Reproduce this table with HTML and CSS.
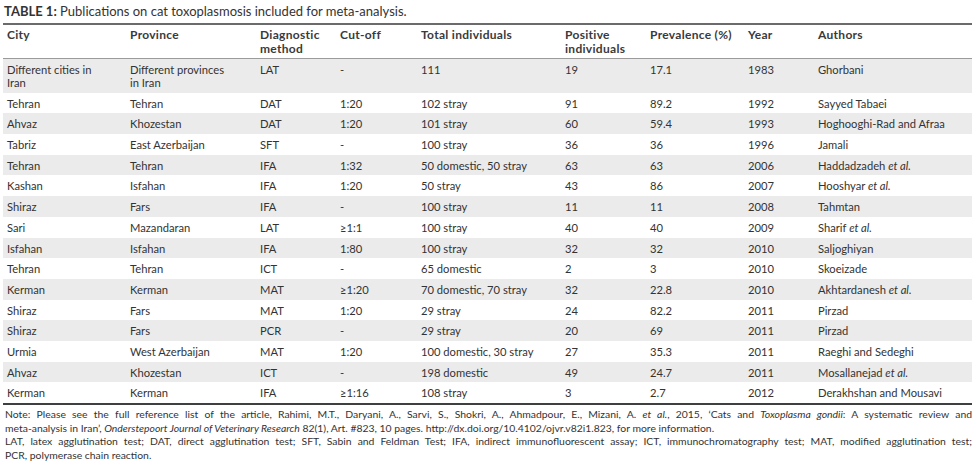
FILE: index.html
```html
<!DOCTYPE html>
<html>
<head>
<meta charset="utf-8">
<link rel="stylesheet" href="styles.css">
</head>
<body>
<div class="page">
  <div class="caption"><b>TABLE 1:</b> Publications on cat toxoplasmosis included for meta-analysis.</div>
  <table class="data">
    <colgroup>
      <col class="c1"><col class="c2"><col class="c3"><col class="c4"><col class="c5"><col class="c6"><col class="c7"><col class="c8"><col class="c9">
    </colgroup>
    <thead>
      <tr><th>City</th><th>Province</th><th>Diagnostic<br>method</th><th>Cut-off</th><th>Total individuals</th><th>Positive<br>individuals</th><th>Prevalence (%)</th><th>Year</th><th>Authors</th></tr>
    </thead>
    <tbody>
      <tr><td>Different cities in<br>Iran</td><td>Different provinces<br>in Iran</td><td>LAT</td><td>-</td><td>111</td><td>19</td><td>17.1</td><td>1983</td><td>Ghorbani</td></tr>
      <tr><td>Tehran</td><td>Tehran</td><td>DAT</td><td>1:20</td><td>102 stray</td><td>91</td><td>89.2</td><td>1992</td><td>Sayyed Tabaei</td></tr>
      <tr><td>Ahvaz</td><td>Khozestan</td><td>DAT</td><td>1:20</td><td>101 stray</td><td>60</td><td>59.4</td><td>1993</td><td>Hoghooghi-Rad and Afraa</td></tr>
      <tr><td>Tabriz</td><td>East Azerbaijan</td><td>SFT</td><td>-</td><td>100 stray</td><td>36</td><td>36</td><td>1996</td><td>Jamali</td></tr>
      <tr><td>Tehran</td><td>Tehran</td><td>IFA</td><td>1:32</td><td>50 domestic, 50 stray</td><td>63</td><td>63</td><td>2006</td><td>Haddadzadeh <i>et al.</i></td></tr>
      <tr><td>Kashan</td><td>Isfahan</td><td>IFA</td><td>1:20</td><td>50 stray</td><td>43</td><td>86</td><td>2007</td><td>Hooshyar <i>et al.</i></td></tr>
      <tr><td>Shiraz</td><td>Fars</td><td>IFA</td><td>-</td><td>100 stray</td><td>11</td><td>11</td><td>2008</td><td>Tahmtan</td></tr>
      <tr><td>Sari</td><td>Mazandaran</td><td>LAT</td><td>≥1:1</td><td>100 stray</td><td>40</td><td>40</td><td>2009</td><td>Sharif <i>et al.</i></td></tr>
      <tr><td>Isfahan</td><td>Isfahan</td><td>IFA</td><td>1:80</td><td>100 stray</td><td>32</td><td>32</td><td>2010</td><td>Saljoghiyan</td></tr>
      <tr><td>Tehran</td><td>Tehran</td><td>ICT</td><td>-</td><td>65 domestic</td><td>2</td><td>3</td><td>2010</td><td>Skoeizade</td></tr>
      <tr><td>Kerman</td><td>Kerman</td><td>MAT</td><td>≥1:20</td><td>70 domestic, 70 stray</td><td>32</td><td>22.8</td><td>2010</td><td>Akhtardanesh <i>et al.</i></td></tr>
      <tr><td>Shiraz</td><td>Fars</td><td>MAT</td><td>1:20</td><td>29 stray</td><td>24</td><td>82.2</td><td>2011</td><td>Pirzad</td></tr>
      <tr><td>Shiraz</td><td>Fars</td><td>PCR</td><td>-</td><td>29 stray</td><td>20</td><td>69</td><td>2011</td><td>Pirzad</td></tr>
      <tr><td>Urmia</td><td>West Azerbaijan</td><td>MAT</td><td>1:20</td><td>100 domestic, 30 stray</td><td>27</td><td>35.3</td><td>2011</td><td>Raeghi and Sedeghi</td></tr>
      <tr><td>Ahvaz</td><td>Khozestan</td><td>ICT</td><td>-</td><td>198 domestic</td><td>49</td><td>24.7</td><td>2011</td><td>Mosallanejad <i>et al.</i></td></tr>
      <tr><td>Kerman</td><td>Kerman</td><td>IFA</td><td>≥1:16</td><td>108 stray</td><td>3</td><td>2.7</td><td>2012</td><td>Derakhshan and Mousavi</td></tr>
    </tbody>
  </table>
  <div class="notes">
    <div class="line just">Note: Please see the full reference list of the article, Rahimi, M.T., Daryani, A., Sarvi, S., Shokri, A., Ahmadpour, E., Mizani, A. <i>et al.</i>, 2015, ‘Cats and <i>Toxoplasma gondii</i>: A systematic review and</div>
    <div class="line">meta-analysis in Iran’, <i>Onderstepoort Journal of Veterinary Research</i> 82(1), Art. #823, 10 pages. http://dx.doi.org/10.4102/ojvr.v82i1.823, for more information.</div>
    <div class="line just">LAT, latex agglutination test; DAT, direct agglutination test; SFT, Sabin and Feldman Test; IFA, indirect immunofluorescent assay; ICT, immunochromatography test; MAT, modified agglutination test;</div>
    <div class="line">PCR, polymerase chain reaction.</div>
  </div>
</div>
</body>
</html>
```

FILE: styles.css
```css
html, body {
  margin: 0;
  padding: 0;
  background: #ffffff;
}
body {
  font-family: Lato, "Liberation Sans", sans-serif;
  color: #333333;
}
.page {
  width: 969px;
  padding: 3px 0 0 3px;
}
.caption {
  font-size: 13px;
  line-height: 16px;
  height: 16px;
  padding-left: 1px;
  color: #333;
  margin-bottom: 4px;
}
.caption b {
  font-weight: 700;
}
.data {
  width: 969px;
  border-collapse: collapse;
  table-layout: fixed;
  font-size: 11.2px;
  border-top: 2px solid #6b6b6b;
  border-bottom: 2px solid #3f3f3f;
}
.c1 { width: 123px; }
.c2 { width: 130px; }
.c3 { width: 80px; }
.c4 { width: 81px; }
.c5 { width: 144px; }
.c6 { width: 85px; }
.c7 { width: 98px; }
.c8 { width: 70px; }
.c9 { width: 158px; }
.data th, .data td {
  text-align: left;
  vertical-align: top;
  padding: 4px 4px 3.7px 4px;
  line-height: 13px;
  white-space: nowrap;
}
.data th {
  font-weight: 700;
  font-size: 12px;
  line-height: 14px;
  padding-top: 3px;
  padding-bottom: 2px;
  letter-spacing: 0.3px;
  color: #3a3a3a;
  border-bottom: 1px solid #9a9a9a;
}
.data tbody tr:nth-child(odd) {
  background: #ebebeb;
}
.notes {
  padding-top: 3px;
  font-size: 10.4px;
  line-height: 13.5px;
  color: #333;
}
.line {
  white-space: nowrap;
  padding-left: 2px;
}
.line.just {
  white-space: normal;
  text-align: justify;
  text-align-last: justify;
}
```
